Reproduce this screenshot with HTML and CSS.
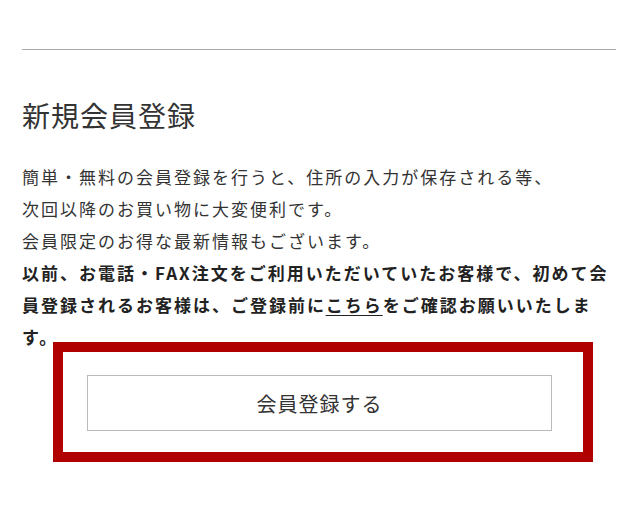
FILE: index.html
```html
<!DOCTYPE html>
<html lang="ja">
<head>
<meta charset="utf-8">
<title>新規会員登録</title>
<link rel="stylesheet" href="styles.css">
</head>
<body>
<div class="page">
  <hr class="divider">
  <h2 class="title">新規会員登録</h2>
  <div class="lead">
    <p>簡単・無料の会員登録を行うと、住所の入力が保存される等、<br>次回以降のお買い物に大変便利です。<br>会員限定のお得な最新情報もございます。</p>
    <p class="notice">以前、お電話・FAX注文をご利用いただいていたお客様で、初めて会員登録されるお客様は、ご登録前に<a href="#" class="link">こちら</a>をご確認お願いいたします。</p>
  </div>
  <div class="highlight">
    <a href="#" class="btn">会員登録する</a>
  </div>
</div>
</body>
</html>
```

FILE: styles.css
```css
html, body {
  margin: 0;
  padding: 0;
  background: #fff;
}
body {
  font-family: "Noto Sans CJK JP", "Noto Sans", sans-serif;
  color: #333;
}
.page {
  width: 594px;
  padding: 49px 0 0 22px;
}
.divider {
  margin: 0;
  border: 0;
  border-top: 1px solid #aaa;
  height: 0;
}
.title {
  margin: 45px 0 0;
  font-size: 28px;
  font-weight: 400;
  letter-spacing: 1px;
  line-height: 40px;
  color: #333;
}
.lead {
  margin-top: 26px;
  font-size: 17px;
  letter-spacing: 2px;
  line-height: 32px;
}
.lead p {
  margin: 0;
}
.notice {
  font-weight: 700;
  color: #222;
}
.link {
  color: inherit;
  text-decoration: underline;
  text-underline-offset: 3px;
  text-decoration-thickness: 1px;
}
.highlight {
  width: 520px;
  margin: -11px 0 0 31px;
  border: 10px solid #b00000;
  padding: 23px 31px 21px 24px;
  box-sizing: content-box;
}
.highlight {
  width: 465px;
}
.btn {
  display: flex;
  align-items: center;
  justify-content: center;
  height: 54px;
  border: 1px solid #bbb;
  color: #333;
  text-decoration: none;
  font-size: 20px;
  letter-spacing: 1px;
}
```
